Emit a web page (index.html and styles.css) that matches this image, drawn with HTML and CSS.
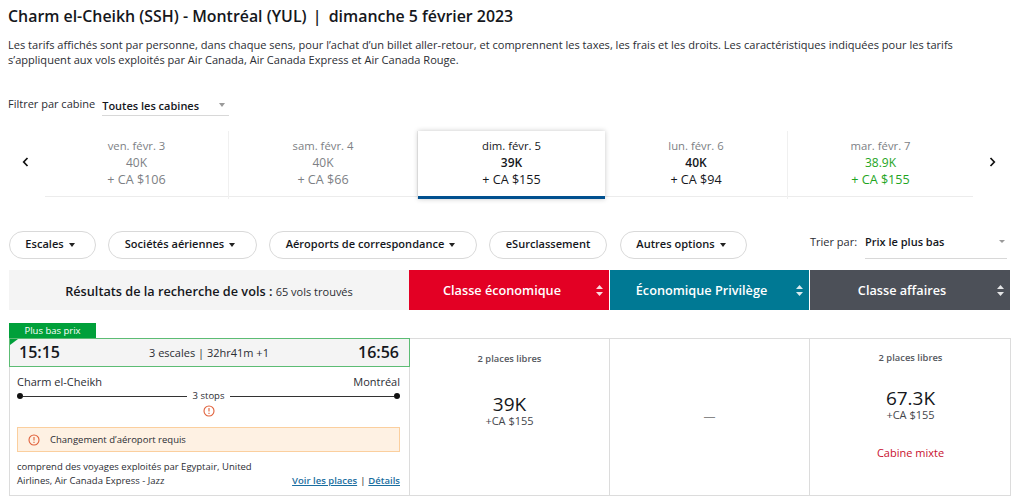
FILE: index.html
```html
<!DOCTYPE html>
<html lang="fr">
<head>
<meta charset="utf-8">
<title>Vols</title>
<link rel="stylesheet" href="styles.css">
</head>
<body>
<main class="page">
  <h1 class="title">Charm el-Cheikh (SSH) - Montréal (YUL) <span class="sep">|</span>&nbsp; dimanche 5 février 2023</h1>
  <p class="intro">Les tarifs affichés sont par personne, dans chaque sens, pour l’achat d’un billet aller-retour, et comprennent les taxes, les frais et les droits. Les caractéristiques indiquées pour les tarifs s’appliquent aux vols exploités par Air Canada, Air Canada Express et Air Canada Rouge.</p>

  <div class="cabin-filter">
    <span class="cabin-label">Filtrer par cabine</span>
    <div class="cabin-select"><span>Toutes les cabines</span><i class="caret caret-grey"></i></div>
  </div>

  <div class="dates">
    <button class="chev"><svg width="7" height="10" viewBox="0 0 7 10"><path d="M5.5 1 1.7 5l3.8 4" fill="none" stroke="#111" stroke-width="1.7"/></svg></button>
    <div class="date-list">
      <div class="date muted"><span>ven. févr. 3</span><span>40K</span><span class="money">+ CA $106</span></div>
      <div class="date muted"><span>sam. févr. 4</span><span>40K</span><span class="money">+ CA $66</span></div>
      <div class="date selected"><span>dim. févr. 5</span><b>39K</b><span class="money">+ CA $155</span></div>
      <div class="date plain"><span class="day-muted">lun. févr. 6</span><b>40K</b><span class="money">+ CA $94</span></div>
      <div class="date green"><span class="day-muted">mar. févr. 7</span><span>38.9K</span><span class="money">+ CA $155</span></div>
    </div>
    <button class="chev"><svg width="7" height="10" viewBox="0 0 7 10"><path d="M1.5 1 5.3 5 1.5 9" fill="none" stroke="#111" stroke-width="1.7"/></svg></button>
  </div>

  <div class="filters">
    <button class="pill pill-a">Escales<i class="caret"></i></button>
    <button class="pill pill-b">Sociétés aériennes<i class="caret"></i></button>
    <button class="pill pill-c">Aéroports de correspondance<i class="caret"></i></button>
    <button class="pill pill-d">eSurclassement</button>
    <button class="pill pill-e">Autres options<i class="caret"></i></button>
    <div class="sort">
      <span class="sort-label">Trier par:</span>
      <div class="sort-select"><span>Prix le plus bas</span><i class="caret caret-grey caret-small"></i></div>
    </div>
  </div>

  <div class="head">
    <div class="head-results"><b>Résultats de la recherche de vols :</b>&nbsp;<span>65 vols trouvés</span></div>
    <div class="head-cabin red">Classe économique<svg class="updown" width="7" height="11" viewBox="0 0 7 11"><path d="M3.5 0 7 4H0zM3.5 11 0 7h7z" fill="#fff" opacity=".85"/></svg></div>
    <div class="head-cabin teal">Économique Privilège<svg class="updown" width="7" height="11" viewBox="0 0 7 11"><path d="M3.5 0 7 4H0zM3.5 11 0 7h7z" fill="#fff" opacity=".85"/></svg></div>
    <div class="head-cabin slate">Classe affaires<svg class="updown" width="7" height="11" viewBox="0 0 7 11"><path d="M3.5 0 7 4H0zM3.5 11 0 7h7z" fill="#fff" opacity=".85"/></svg></div>
  </div>

  <div class="badge">Plus bas prix</div>
  <div class="flight">
    <div class="itin">
      <div class="times"><b>15:15</b><span>3 escales | 32hr41m +1</span><b>16:56</b></div>
      <div class="itin-body">
        <div class="cities"><span>Charm el-Cheikh</span><span>Montréal</span></div>
        <div class="route">
          <i class="dot"></i><i class="line"></i>
          <span class="stops">3 stops</span>
          <i class="line"></i><i class="dot"></i>
        </div>
        <div class="route-warn">
          <svg width="12" height="12" viewBox="0 0 12 12"><circle cx="6" cy="6" r="5" fill="none" stroke="#e0603a" stroke-width="1.1"/><path d="M6 3v3.6M6 7.8v1.1" stroke="#e0603a" stroke-width="1.1"/></svg>
        </div>
        <div class="notice">
          <svg width="12" height="12" viewBox="0 0 12 12"><circle cx="6" cy="6" r="5" fill="none" stroke="#e0603a" stroke-width="1.1"/><path d="M6 3v3.6M6 7.8v1.1" stroke="#e0603a" stroke-width="1.1"/></svg>
          <span>Changement d’aéroport requis</span>
        </div>
        <div class="foot">
          <p class="operators">comprend des voyages exploités par Egyptair, United Airlines, Air Canada Express - Jazz</p>
          <div class="links"><a href="#">Voir les places</a><span>|</span><a href="#">Détails</a></div>
        </div>
      </div>
    </div>
    <div class="fare fare-eco">
      <div class="seats">2 places libres</div>
      <div class="points">39K</div>
      <div class="cash">+CA $155</div>
    </div>
    <div class="fare fare-none">—</div>
    <div class="fare fare-bus">
      <div class="seats">2 places libres</div>
      <div class="points">67.3K</div>
      <div class="cash">+CA $155</div>
      <div class="mixed">Cabine mixte</div>
    </div>
  </div>
</main>
</body>
</html>
```
FILE: styles.css
```css
* { box-sizing: border-box; }
html, body { margin: 0; padding: 0; }
body {
  background: #fff;
  color: #2b2d33;
  font-family: "Open Sans", "Liberation Sans", sans-serif;
  overflow: hidden;
  height: 501px;
}
.page { padding: 5px 14px 0 9px; width: 1024px; }
.title { margin: 0 0 0 -1px; font-size: 15.9px; line-height: 22px; font-weight: 600; color: #15171c; white-space: nowrap; }
.sep { margin: 0 -1px 0 2px; }
.intro { margin: 10px 0 0 -1px; font-size: 11.05px; line-height: 15px; color: #2b2d33; width: 1000px; }

.cabin-filter { display: flex; align-items: flex-start; margin-top: 29px; margin-left: -1px; }
.cabin-label { font-size: 11px; line-height: 16px; color: #2b2d33; }
.cabin-select { margin-left: 7px; width: 127px; height: 20px; border-bottom: 1px solid #d8d8d8; display: flex; justify-content: space-between; align-items: center; padding: 0 4px 1px 0; font-size: 11px; font-weight: 600; color: #15171c; }

.caret { display: inline-block; width: 0; height: 0; border: 3.5px solid transparent; border-top: 4px solid #222; border-bottom: 0; margin-left: 5px; vertical-align: middle; }
.caret-grey { border-top-color: #9a9a9a; }
.caret-small { border-width: 3px; border-top-width: 3px; border-bottom: 0; }

.dates { display: flex; align-items: stretch; height: 68px; margin-top: 15px; margin-left: -9px; width: 1024px; }
.chev { width: 45px; border: 0; background: none; padding: 0 0 6px 5px; display: flex; align-items: center; justify-content: center; }
.chev:last-child { width: 51px; justify-content: flex-end; padding: 0 28px 6px 0; }
.date-list { flex: 0 0 928px; display: grid; grid-template-columns: 184px 189px 187px 183px 185px; border-bottom: 1px solid #ececec; height: 66px; }
.date { display: flex; flex-direction: column; align-items: center; padding-top: 6px; font-size: 11.3px; line-height: 17px; border-right: 1px solid #f0f0f0; color: #15171c; }
.date:last-child { border-right: 0; }
.date .money { font-size: 12.6px; }
.date > span:nth-child(2), .date > b { font-size: 12px; }
.muted { color: #7d7f85; }
.day-muted { color: #7d7f85; }
.date b { font-weight: 600; }
.selected { height: 68px; box-shadow: 0 0 5px rgba(0,0,0,.22); border-right: 0; border-bottom: 3px solid #00508f; background: #fff; }
.green { color: #1ea51e; }
.green .day-muted { color: #7d7f85; }

.filters { display: flex; align-items: center; margin-top: 32px; height: 28px; }
.pill { height: 28px; border: 1px solid #d9d9d9; border-radius: 14px; background: #fff; font-family: inherit; font-size: 11.05px; font-weight: 600; color: #15171c; padding: 0 5px 3px 0; margin-right: 12px; text-align: center; }
.pill-a { width: 87px; }
.pill-b { width: 149px; }
.pill-c { width: 208px; }
.pill-d { width: 118px; margin-right: 13px; padding: 0 0 3px; }
.pill-e { width: 127px; margin-right: 0; }
.sort { display: flex; align-items: flex-start; margin-left: 63px; }
.sort-label { font-size: 11px; line-height: 16px; color: #2b2d33; width: 55px; margin-top: 2px; }
.sort-select { width: 142px; height: 27px; border-bottom: 1px solid #d8d8d8; display: flex; justify-content: space-between; padding: 2px 2px 0 0; font-size: 11px; line-height: 16px; font-weight: 600; color: #15171c; }
.sort-select .caret { margin-top: 6px; }

.head { display: flex; height: 40px; margin-top: 11px; width: 1001px; }
.head-results { width: 400px; background: #f4f4f4; display: flex; align-items: center; justify-content: center; padding-top: 2px; font-size: 12.7px; color: #15171c; white-space: nowrap; }
.head-results b { font-weight: 600; }
.head-results span { font-size: 11px; color: #2b2d33; }
.head-cabin { position: relative; display: flex; align-items: center; justify-content: center; color: #fff; font-size: 12.7px; font-weight: 600; padding-right: 14px; }
.updown { position: absolute; right: 6px; top: 15px; }
.red { width: 200px; background: #e30024; }
.teal { width: 200px; background: #007994; border-left: 1px solid #fff; padding-right: 16px; }
.slate { width: 201px; background: #4c5058; border-left: 1px solid #fff; padding-right: 16px; }

.badge { margin-top: 13px; width: 87px; height: 15px; background: #00a03a; color: #fff; font-size: 9.5px; line-height: 15px; text-align: center; }
.flight { display: flex; width: 1002px; height: 158px; border: 1px solid #dcdcdc; border-left: 0; }
.itin { border-right: 1px solid #dcdcdc; border-left: 1px solid #dcdcdc; flex: 0 0 401px; }
.times { position: relative; margin: -1px -1px 0 -1px; height: 29px; border: 1px solid #5cbc74; background: #f4f4f4; display: flex; align-items: center; justify-content: space-between; padding: 0 10px 1px 9px; font-size: 11px; color: #2b2d33; }
.times::before { content: ""; position: absolute; left: 0; top: 0; border-style: solid; border-width: 6px 8px 0 0; border-color: #00a03a transparent transparent transparent; }
.times b { font-size: 16px; font-weight: 600; color: #15171c; }
.itin-body { padding: 7px 9px 0 7px; }
.cities { display: flex; justify-content: space-between; font-size: 11px; line-height: 16px; color: #2b2d33; }
.route { display: flex; align-items: center; height: 14px; margin-top: -1px; }
.dot { width: 6px; height: 6px; border-radius: 50%; background: #111; flex: none; }
.line { flex: 1; height: 1px; background: #333; }
.stops { font-size: 9.5px; line-height: 14px; padding: 0 6px; color: #2b2d33; }
.route-warn { display: flex; justify-content: center; height: 13px; margin-top: 2px; }
.notice { margin-top: 9px; height: 25px; border: 1px solid #fbcf9e; background: #fef1e3; display: flex; align-items: center; padding-left: 10px; gap: 10px; font-size: 9.5px; color: #2b2d33; }
.foot { position: relative; margin-top: 8px; }
.operators { margin: 0; width: 250px; font-size: 9.5px; line-height: 14px; color: #2b2d33; }
.links { position: absolute; right: 0; bottom: 0; display: flex; gap: 3px; font-size: 9.5px; line-height: 14px; font-weight: 600; color: #555; }
.links a { color: #1a6ea0; text-decoration: underline; }

.fare { flex: 0 0 200px; display: flex; flex-direction: column; align-items: center; text-align: center; border-right: 1px solid #dcdcdc; }
.fare-bus { flex: 0 0 201px; border-right: 0; padding-top: 13px; }
.fare-eco { padding-top: 14px; }
.fare-none { justify-content: center; font-size: 12px; color: #888; padding-bottom: 2px; }
.seats { font-size: 9.4px; line-height: 12px; font-weight: 600; color: #555860; }
.points { font-size: 19px; line-height: 22px; color: #15171c; margin-top: 23px; }
.fare-eco .points { margin-top: 28px; }
.cash { font-size: 11px; line-height: 14px; color: #44464c; }
.fare-eco .cash { margin-top: -1px; }
.fare-bus .cash { margin-top: -1px; }
.mixed { margin-top: 23px; font-size: 11px; line-height: 15px; color: #c8102e; }
```
